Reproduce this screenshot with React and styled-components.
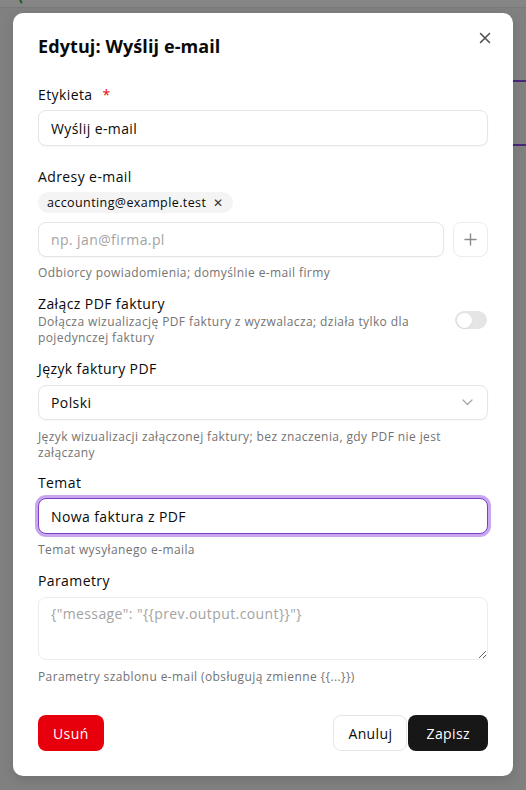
import React from 'react'
import styled, { createGlobalStyle } from 'styled-components'

const GlobalStyle = createGlobalStyle`
  * { box-sizing: border-box; }
  html, body { margin: 0; padding: 0; }
  body {
    font-family: "Open Sans", "Noto Sans", sans-serif;
    color: #0a0a0a;
    background: #808080;
    letter-spacing: 0.4px;
  }
`

const Page = styled.div`
  position: relative;
  width: 526px;
  height: 790px;
  overflow: hidden;
  background: #808080;
  padding: 13px 13px 0 13px;
`

const TopBand = styled.div`
  position: absolute;
  left: 0;
  top: 0;
  width: 526px;
  height: 8px;
  background: #858585;
  border-bottom: 1px solid #7a7a7a;
`

const GreenArc = styled.div`
  position: absolute;
  left: 19px;
  top: -10px;
  width: 16px;
  height: 16px;
  border-radius: 50%;
  border-left: 2px solid #1f5c1f;
  border-bottom: 2px solid transparent;
`

const PurpleLine = styled.div`
  position: absolute;
  left: 513px;
  top: ${({ $top }) => $top}px;
  width: 13px;
  height: 2px;
  background: #48287a;
`

const Modal = styled.div`
  position: relative;
  width: 500px;
  height: 763px;
  background: #fff;
  border-radius: 10px;
  box-shadow: 0 4px 12px rgba(0, 0, 0, 0.12);
  padding: 20px 25px 25px 25px;
  display: flex;
  flex-direction: column;
`

const Title = styled.h2`
  margin: 0;
  font-size: 18px;
  line-height: 26px;
  font-weight: 700;
  letter-spacing: 0.1px;
`

const CloseBtn = styled.button`
  position: absolute;
  top: 17px;
  right: 20px;
  width: 16px;
  height: 16px;
  padding: 0;
  border: none;
  background: transparent;
  display: flex;
  align-items: center;
  justify-content: center;
  color: #4a4a4a;
`

const Field = styled.div`
  display: flex;
  flex-direction: column;
  margin-top: ${({ $mt }) => $mt}px;
`

const Label = styled.label`
  font-size: 14px;
  line-height: 20px;
  color: #0a0a0a;
  display: flex;
  gap: 10px;
`

const Req = styled.span`
  color: #e7000b;
`

const Input = styled.input`
  width: 100%;
  height: 36px;
  margin-top: ${({ $mt }) => $mt ?? 5}px;
  border: 1px solid ${({ $focus }) => ($focus ? '#7b3fc6' : '#e5e5e5')};
  box-shadow: ${({ $focus }) => ($focus ? '0 0 0 3px #c9a7ef' : '0 1px 2px rgba(0,0,0,0.04)')};
  border-radius: 8px;
  padding: 0 12px;
  font-family: inherit;
  font-size: 14px;
  letter-spacing: 0.4px;
  color: #0a0a0a;
  background: #fff;
  outline: none;
  &::placeholder { color: #a3a3a3; }
`

const Help = styled.div`
  margin-top: ${({ $mt }) => $mt ?? 8}px;
  font-size: 12px;
  line-height: 16px;
  color: #737373;
`

const Chip = styled.div`
  align-self: flex-start;
  margin-top: 5px;
  height: 21px;
  border-radius: 11px;
  background: #f4f4f4;
  padding: 0 9px 0 9px;
  display: flex;
  align-items: center;
  gap: 7px;
  font-size: 12.5px;
  color: #0a0a0a;
`

const ChipX = styled.span`
  font-size: 12px;
  color: #333;
`

const InputRow = styled.div`
  display: flex;
  gap: 9px;
  margin-top: 9px;
`

const IconBtn = styled.button`
  flex: 0 0 35px;
  width: 35px;
  height: 35px;
  border: 1px solid #ececec;
  border-radius: 8px;
  background: #fff;
  display: flex;
  align-items: center;
  justify-content: center;
  color: #8a8a8a;
  padding: 0;
`

const SwitchRow = styled.div`
  display: flex;
  align-items: center;
  justify-content: space-between;
  margin-top: 13px;
`

const SwitchText = styled.div`
  display: flex;
  flex-direction: column;
  width: 400px;
`

const SwitchDesc = styled.div`
  font-size: 12px;
  line-height: 16px;
  color: #737373;
`

const Track = styled.div`
  width: 32px;
  height: 18px;
  border-radius: 9px;
  background: #e5e5e5;
  padding: 2px;
  display: flex;
  margin-right: 1px;
`

const Thumb = styled.div`
  width: 15px;
  height: 15px;
  margin-top: -0.5px;
  border-radius: 50%;
  background: #fff;
  box-shadow: 0 1px 2px rgba(0, 0, 0, 0.08);
`

const Select = styled.div`
  height: 35px;
  margin-top: 6px;
  border: 1px solid #e5e5e5;
  border-radius: 8px;
  padding: 0 14px 0 12px;
  display: flex;
  align-items: center;
  justify-content: space-between;
  font-size: 14px;
  box-shadow: 0 1px 2px rgba(0, 0, 0, 0.04);
`

const TextArea = styled.textarea`
  width: 100%;
  height: 63px;
  margin-top: 6px;
  border: 1px solid #ececec;
  border-radius: 8px;
  padding: 6px 12px;
  font-family: inherit;
  font-size: 14px;
  letter-spacing: 0.4px;
  line-height: 20px;
  outline: none;
  resize: vertical;
  &::placeholder { color: #a3a3a3; }
`

const Footer = styled.div`
  margin-top: 30px;
  display: flex;
  align-items: center;
  justify-content: space-between;
`

const Actions = styled.div`
  display: flex;
  gap: 1px;
`

const Button = styled.button`
  height: 36px;
  padding: 0 ${({ $px }) => $px}px;
  border-radius: 8px;
  font-family: inherit;
  font-size: 14px;
  font-weight: 500;
  letter-spacing: 0.4px;
  cursor: pointer;
  border: 1px solid ${({ $variant }) => ($variant === 'outline' ? '#e5e5e5' : 'transparent')};
  background: ${({ $variant }) =>
    $variant === 'danger' ? '#e7000b' : $variant === 'primary' ? '#171717' : '#fff'};
  color: ${({ $variant }) => ($variant === 'outline' ? '#0a0a0a' : '#fff')};
`

const App = () => {
  return (
    <>
      <GlobalStyle />
      <Page>
        <TopBand />
        <GreenArc />
        <PurpleLine $top={80} />
        <PurpleLine $top={144} />
        <Modal>
          <CloseBtn aria-label='Zamknij'>
            <svg width='12' height='12' viewBox='0 0 12 12' fill='none' stroke='currentColor' strokeWidth='1.5' strokeLinecap='round'>
              <path d='M1.5 1.5l9 9M10.5 1.5l-9 9' />
            </svg>
          </CloseBtn>
          <Title>Edytuj: Wyślij e-mail</Title>

          <Field $mt={26}>
            <Label>Etykieta <Req>*</Req></Label>
            <Input defaultValue='Wyślij e-mail' />
          </Field>

          <Field $mt={21}>
            <Label>Adresy e-mail</Label>
            <Chip>
              accounting@example.test
              <ChipX>✕</ChipX>
            </Chip>
            <InputRow>
              <Input $mt={0} style={{ height: 35 }} placeholder='np. jan@firma.pl' />
              <IconBtn aria-label='Dodaj'>
                <svg width='13' height='13' viewBox='0 0 13 13' fill='none' stroke='currentColor' strokeWidth='1.4' strokeLinecap='round'>
                  <path d='M6.5 1v11M1 6.5h11' />
                </svg>
              </IconBtn>
            </InputRow>
            <Help>Odbiorcy powiadomienia; domyślnie e-mail firmy</Help>
          </Field>

          <SwitchRow>
            <SwitchText>
              <Label>Załącz PDF faktury</Label>
              <SwitchDesc>
                Dołącza wizualizację PDF faktury z wyzwalacza; działa tylko dla pojedynczej faktury
              </SwitchDesc>
            </SwitchText>
            <Track>
              <Thumb />
            </Track>
          </SwitchRow>

          <Field $mt={13}>
            <Label>Język faktury PDF</Label>
            <Select>
              Polski
              <svg width='11' height='7' viewBox='0 0 11 7' fill='none' stroke='#a3a3a3' strokeWidth='1.2' strokeLinecap='round' strokeLinejoin='round'>
                <path d='M1 1l4.5 4.5L10 1' />
              </svg>
            </Select>
            <Help $mt={9}>
              Język wizualizacji załączonej faktury; bez znaczenia, gdy PDF nie jest załączany
            </Help>
          </Field>

          <Field $mt={12}>
            <Label>Temat</Label>
            <Input $focus defaultValue='Nowa faktura z PDF' />
            <Help>Temat wysyłanego e-maila</Help>
          </Field>

          <Field $mt={13}>
            <Label>Parametry</Label>
            <TextArea placeholder='{"message": "{{prev.output.count}}"}' />
            <Help $mt={9}>Parametry szablonu e-mail (obsługują zmienne {'{{...}}'})</Help>
          </Field>

          <Footer>
            <Button $variant='danger' $px={14}>Usuń</Button>
            <Actions>
              <Button $variant='outline' $px={14}>Anuluj</Button>
              <Button $variant='primary' $px={17}>Zapisz</Button>
            </Actions>
          </Footer>
        </Modal>
      </Page>
    </>
  )
}

export default App
